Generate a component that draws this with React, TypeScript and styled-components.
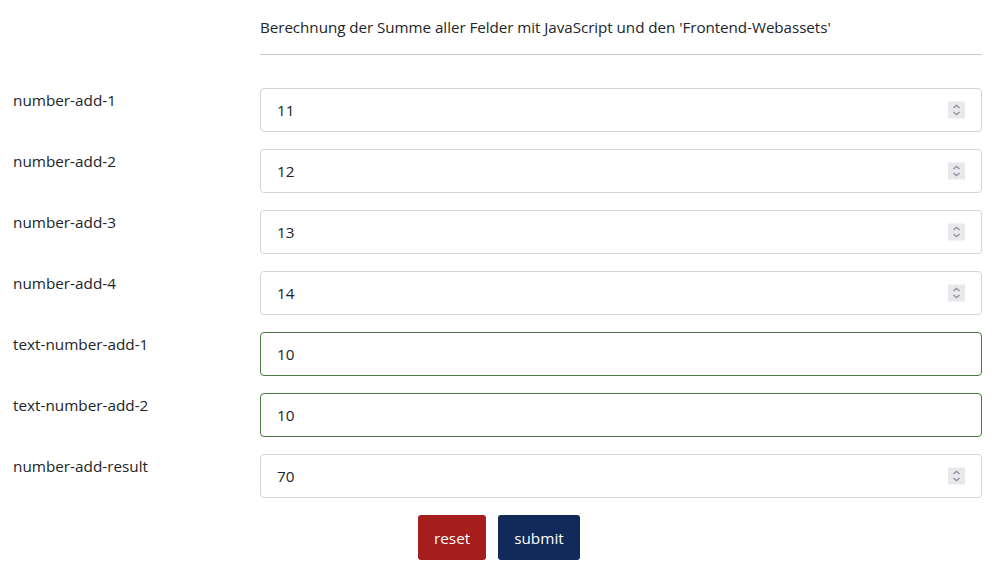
import React, { useState } from "react";
import styled, { createGlobalStyle } from "styled-components";

const GlobalStyle = createGlobalStyle`
  html, body {
    margin: 0;
    padding: 0;
    background: #ffffff;
    font-family: "Open Sans", "Noto Sans", Arial, sans-serif;
    color: #212529;
  }
`;

const Page = styled.div`
  padding: 0 24px 0 13px;
`;

const Form = styled.form`
  display: grid;
  grid-template-columns: 247px 1fr;
  row-gap: 17px;
`;

const Heading = styled.div`
  grid-column: 2;
  font-size: 15.2px;
  letter-spacing: -0.05px;
  line-height: 20px;
  padding-top: 17px;
  padding-bottom: 17px;
  border-bottom: 1px solid #c8c8c8;
  margin-bottom: 16px;
`;

const Label = styled.label`
  font-size: 15.3px;
  line-height: 20px;
  padding-top: 2px;
`;

const Field = styled.div`
  position: relative;
`;

const Input = styled.input<{ $valid?: boolean }>`
  box-sizing: border-box;
  width: 100%;
  height: 44px;
  padding: 0 16px;
  font-family: inherit;
  font-size: 15.3px;
  color: #212529;
  background: #fff;
  border: 1px solid ${(p) => (p.$valid ? "#4a7a42" : "#d4d4d4")};
  border-radius: 4px;
  outline: none;
  -moz-appearance: textfield;
  &::-webkit-inner-spin-button,
  &::-webkit-outer-spin-button {
    -webkit-appearance: none;
    margin: 0;
  }
`;

const Spinner = styled.span`
  position: absolute;
  right: 17px;
  top: 50%;
  transform: translateY(-50%);
  width: 17px;
  height: 17px;
  background: #e9e9ed;
  display: flex;
  align-items: center;
  justify-content: center;
  pointer-events: none;
`;

const Actions = styled.div`
  grid-column: 2;
  display: flex;
  gap: 12px;
  padding-left: 158px;
`;

const Button = styled.button<{ $variant: "reset" | "submit" }>`
  height: 45px;
  padding: 0 16px;
  font-family: inherit;
  font-size: 15.3px;
  color: #fff;
  border: none;
  border-radius: 3px;
  background: ${(p) => (p.$variant === "reset" ? "#a51d1d" : "#112a59")};
  cursor: pointer;
`;

const SpinIcon = () => (
  <svg width="11" height="13" viewBox="0 0 11 13" fill="none">
    <path d="M2.5 4.5 L5.5 1.8 L8.5 4.5" stroke="#8a8a92" strokeWidth="1.2" />
    <path d="M2.5 8.5 L5.5 11.2 L8.5 8.5" stroke="#8a8a92" strokeWidth="1.2" />
  </svg>
);

type Row = { name: string; value: string; kind: "number" | "text" };

const initial: Row[] = [
  { name: "number-add-1", value: "11", kind: "number" },
  { name: "number-add-2", value: "12", kind: "number" },
  { name: "number-add-3", value: "13", kind: "number" },
  { name: "number-add-4", value: "14", kind: "number" },
  { name: "text-number-add-1", value: "10", kind: "text" },
  { name: "text-number-add-2", value: "10", kind: "text" },
  { name: "number-add-result", value: "70", kind: "number" },
];

export default function App() {
  const [rows, setRows] = useState<Row[]>(initial);

  const update = (i: number, value: string) =>
    setRows((r) => r.map((row, j) => (j === i ? { ...row, value } : row)));

  return (
    <Page>
      <GlobalStyle />
      <Form onSubmit={(e) => e.preventDefault()}>
        <Heading>
          Berechnung der Summe aller Felder mit JavaScript und den
          'Frontend-Webassets'
        </Heading>
        {rows.map((row, i) => (
          <React.Fragment key={row.name}>
            <Label htmlFor={row.name}>{row.name}</Label>
            <Field>
              <Input
                id={row.name}
                type={row.kind}
                value={row.value}
                $valid={row.kind === "text"}
                onChange={(e) => update(i, e.target.value)}
              />
              {row.kind === "number" && (
                <Spinner>
                  <SpinIcon />
                </Spinner>
              )}
            </Field>
          </React.Fragment>
        ))}
        <Actions>
          <Button type="button" $variant="reset" onClick={() => setRows(initial)}>
            reset
          </Button>
          <Button type="submit" $variant="submit">
            submit
          </Button>
        </Actions>
      </Form>
    </Page>
  );
}
